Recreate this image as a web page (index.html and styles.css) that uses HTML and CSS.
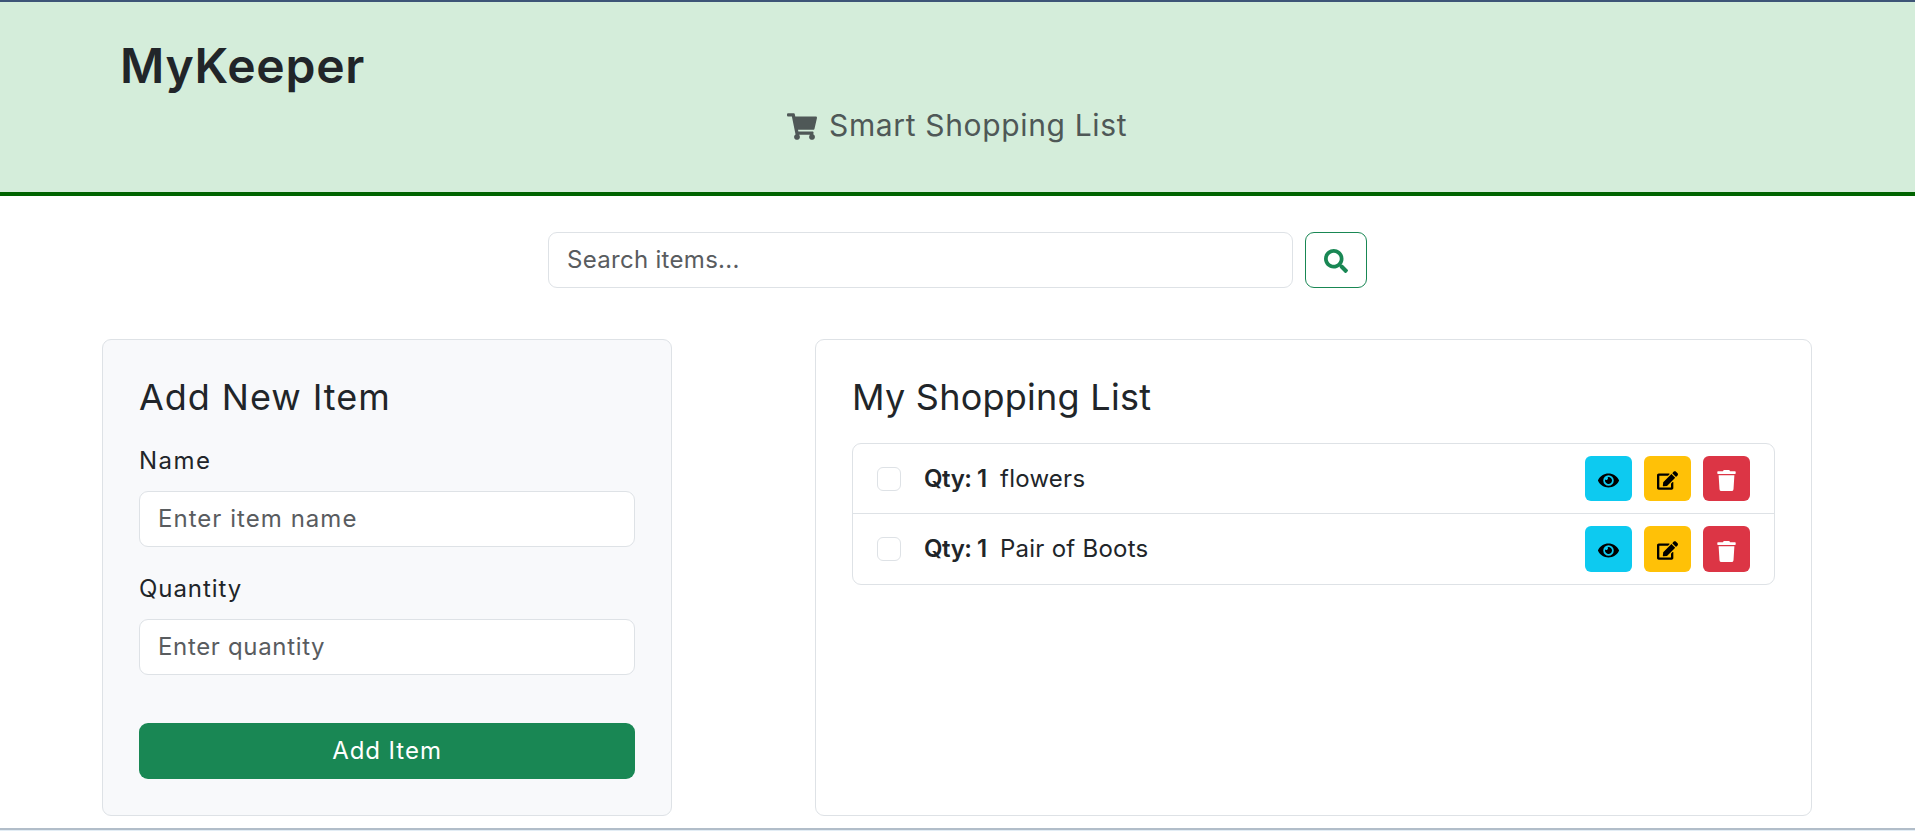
FILE: index.html
```html
<!DOCTYPE html>
<html lang="en">
<head>
<meta charset="utf-8">
<title>MyKeeper</title>
<link rel="stylesheet" href="styles.css">
</head>
<body>
<svg class="sprite" aria-hidden="true">
  <symbol id="eye" viewBox="0 0 576 512"><path d="M572.52 241.4C518.29 135.59 410.93 64 288 64S57.68 135.64 3.48 241.41a32.35 32.35 0 0 0 0 29.19C57.71 376.41 165.07 448 288 448s230.32-71.64 284.52-177.41a32.35 32.35 0 0 0 0-29.19zM288 400a144 144 0 1 1 144-144 143.93 143.93 0 0 1-144 144zm0-240a95.31 95.31 0 0 0-25.31 3.79 47.85 47.85 0 0 1-66.9 66.9A95.78 95.78 0 1 0 288 160z"/></symbol>
  <symbol id="edit" viewBox="0 0 576 512"><path d="M402.6 83.2l90.2 90.2c3.8 3.8 3.8 10 0 13.8L274.4 405.6l-92.8 10.3c-12.4 1.4-22.9-9.1-21.5-21.5l10.3-92.8L388.8 83.2c3.8-3.8 10-3.8 13.8 0zm162-22.9l-48.8-48.8c-15.2-15.2-39.9-15.2-55.2 0l-35.4 35.4c-3.8 3.8-3.8 10 0 13.8l90.2 90.2c3.8 3.8 10 3.8 13.8 0l35.4-35.4c15.2-15.3 15.2-40 0-55.2zM384 346.2V448H64V128h229.800c3.2 0 6.200-1.300 8.500-3.500l40-40c7.600-7.600 2.200-20.500-8.500-20.500H48C21.500 64 0 85.500 0 112v352c0 26.500 21.500 48 48 48h352c26.500 0 48-21.500 48-48V306.200c0-10.700-12.900-16-20.500-8.500l-40 40c-2.200 2.300-3.500 5.300-3.500 8.500z"/></symbol>
  <symbol id="trash" viewBox="0 0 448 512"><path d="M432 32H312l-9.400-18.700A24 24 0 0 0 281.100 0H166.800a23.720 23.720 0 0 0-21.400 13.300L136 32H16A16 16 0 0 0 0 48v32a16 16 0 0 0 16 16h416a16 16 0 0 0 16-16V48a16 16 0 0 0-16-16zM53.200 467a48 48 0 0 0 47.900 45h245.800a48 48 0 0 0 47.900-45L416 128H32z"/></symbol>
</svg>

<header class="header">
  <h1 class="brand"><span class="t-brand">MyKeeper</span></h1>
  <p class="tagline">
    <svg class="cart" viewBox="0 0 576 512"><path d="M528.120 301.319l47.273-208C578.806 78.301 567.391 64 551.990 64H159.208l-9.166-44.810C147.758 8.021 137.930 0 126.529 0H24C10.745 0 0 10.745 0 24v16c0 13.255 10.745 24 24 24h69.883l70.248 343.435C147.325 417.100 136 435.222 136 456c0 30.928 25.072 56 56 56s56-25.072 56-56c0-15.674-6.447-29.835-16.824-40h209.647C430.447 426.165 424 440.326 424 456c0 30.928 25.072 56 56 56s56-25.072 56-56c0-22.172-12.888-41.332-31.579-50.405l5.517-24.276c3.413-15.018-8.002-29.319-23.403-29.319H218.117l-6.545-32h293.145c11.206 0 20.920-7.754 23.403-18.681z"/></svg>
    <span class="t-tagline">Smart Shopping List</span>
  </p>
</header>

<main>
  <form class="search">
    <div class="field"><span class="t-search">Search items...</span></div>
    <button class="search-btn" type="button" aria-label="Search">
      <svg viewBox="0 0 512 512"><path d="M505 442.700L405.300 343c-4.500-4.500-10.600-7-17-7H372c27.600-35.300 44-79.700 44-128C416 93.100 322.900 0 208 0S0 93.100 0 208s93.100 208 208 208c48.300 0 92.700-16.400 128-44v16.300c0 6.400 2.500 12.500 7 17l99.700 99.700c9.400 9.400 24.600 9.400 33.900 0l28.300-28.300c9.400-9.400 9.400-24.600.1-34zM208 336c-70.700 0-128-57.200-128-128 0-70.700 57.200-128 128-128 70.700 0 128 57.200 128 128 0 70.700-57.200 128-128 128z"/></svg>
    </button>
  </form>

  <div class="columns">
    <section class="card add">
      <h2><span class="t-add">Add New Item</span></h2>
      <label><span class="t-name">Name</span></label>
      <div class="field"><span class="t-itemname">Enter item name</span></div>
      <label><span class="t-quantity">Quantity</span></label>
      <div class="field"><span class="t-enterqty">Enter quantity</span></div>
      <button class="submit" type="button"><span class="t-submit">Add Item</span></button>
    </section>

    <section class="card list">
      <h2><span class="t-list">My Shopping List</span></h2>
      <ul class="items">
        <li>
          <span class="check"></span>
          <strong class="t-qty">Qty: 1</strong>
          <span class="item-name"><span class="t-item">flowers</span></span>
          <span class="action view"><svg><use href="#eye"/></svg></span>
          <span class="action edit"><svg><use href="#edit"/></svg></span>
          <span class="action delete"><svg><use href="#trash"/></svg></span>
        </li>
        <li>
          <span class="check"></span>
          <strong class="t-qty">Qty: 1</strong>
          <span class="item-name"><span class="t-item">Pair of Boots</span></span>
          <span class="action view"><svg><use href="#eye"/></svg></span>
          <span class="action edit"><svg><use href="#edit"/></svg></span>
          <span class="action delete"><svg><use href="#trash"/></svg></span>
        </li>
      </ul>
    </section>
  </div>
</main>
<footer class="footer"></footer>
</body>
</html>
```
FILE: styles.css
```css
* { box-sizing: border-box; }
html, body { height: 100%; }
body {
  margin: 0;
  display: flex;
  flex-direction: column;
  overflow: hidden;
  background: #fff;
  color: #212529;
  font: 400 24px/36px Inter, "Open Sans", sans-serif;
}
.sprite { display: none; }
svg { fill: currentColor; display: block; flex: none; }
h1, h2, p, ul { margin: 0; padding: 0; }
button { font: inherit; }
span, strong { white-space: nowrap; }

.header {
  height: 196px;
  flex: none;
  border-top: 2px solid #3d5577;
  border-bottom: 4px solid #006400;
  background: #d4edda;
  padding-top: 35px;
}
.brand { padding-left: 120px; font-size: 48px; line-height: 58px; font-weight: 600; }
.tagline {
  display: flex;
  align-items: center;
  margin-top: 8px;
  padding-left: 787px;
  height: 45px;
  font-size: 30px;
  line-height: 45px;
  color: #4f5857;
}
.cart { width: 30px; height: 27px; margin-right: 12px; margin-top: 1px; }

/* Tracking per label */
.t-brand { letter-spacing: 0.75px; }
.t-tagline { letter-spacing: 0.65px; }
.t-search { letter-spacing: 0.3px; }
.t-add { letter-spacing: 0.95px; }
.t-name { letter-spacing: 1.5px; }
.t-itemname { letter-spacing: 1.04px; }
.t-quantity { letter-spacing: 0.95px; }
.t-enterqty { letter-spacing: 0.66px; }
.t-submit { letter-spacing: 0.95px; }
.t-list { letter-spacing: 0.25px; }
.t-qty { letter-spacing: -0.45px; }
.t-item { letter-spacing: 0.25px; }

main { flex: none; height: 632px; padding-top: 36px; }
.search { display: flex; gap: 12px; width: 819px; margin-left: 548px; }
.field {
  display: flex;
  align-items: center;
  flex: 1;
  height: 56px;
  padding: 0 18px;
  border: 1px solid #dee2e6;
  border-radius: 9px;
  background: #fff;
  color: #595c5f;
}
.search-btn {
  display: flex;
  align-items: center;
  justify-content: center;
  width: 62px;
  height: 56px;
  padding: 0;
  border: 1px solid #198754;
  border-radius: 9px;
  background: #fff;
  color: #198754;
}
.search-btn svg { width: 24px; height: 24px; margin-top: 2px; }

.columns {
  display: grid;
  grid-template-columns: 570px 997px;
  justify-content: space-between;
  width: 1710px;
  height: 477px;
  margin: 51px 0 0 102px;
}
.card { border: 1px solid #dee2e6; border-radius: 9px; padding: 36px; }
.card h2 { font-size: 36px; line-height: 43px; font-weight: 400; }
.add { display: flex; flex-direction: column; background: #f8f9fb; }
.add .field { flex: none; }
.add label { display: block; height: 48px; margin-top: 24px; }
.submit {
  height: 56px;
  margin-top: 48px;
  padding: 0;
  border: 0;
  border-radius: 9px;
  background: #198754;
  color: #fff;
}

.items {
  height: 142px;
  margin-top: 24px;
  border: 1px solid #dee2e6;
  border-radius: 9px;
  list-style: none;
}
.items li { display: flex; align-items: center; height: 69px; padding: 0 24px; }
.items li + li { border-top: 1px solid #dee2e6; height: 71px; }
.check { width: 24px; height: 24px; border: 1px solid #dee2e6; border-radius: 6px; }
.items strong { margin-left: 23px; width: 76px; font-weight: 600; }
.item-name { flex: 1; }
.action {
  display: flex;
  align-items: center;
  justify-content: center;
  width: 47px;
  height: 45px;
  margin-left: 12px;
  border-radius: 6px;
}
.items li + li .action { height: 46px; }
.action svg { width: 21px; height: 19px; margin-top: 3px; }
.view { background: #0dcaf0; color: #000; }
.edit { background: #ffc107; color: #000; }
.delete { background: #dc3545; color: #fff; }
.delete svg { width: 19px; height: 21px; margin-top: 4px; }

.footer { flex: none; height: 3px; border-top: 2px solid #b1bdc9; background: #e3edf5; }
```
